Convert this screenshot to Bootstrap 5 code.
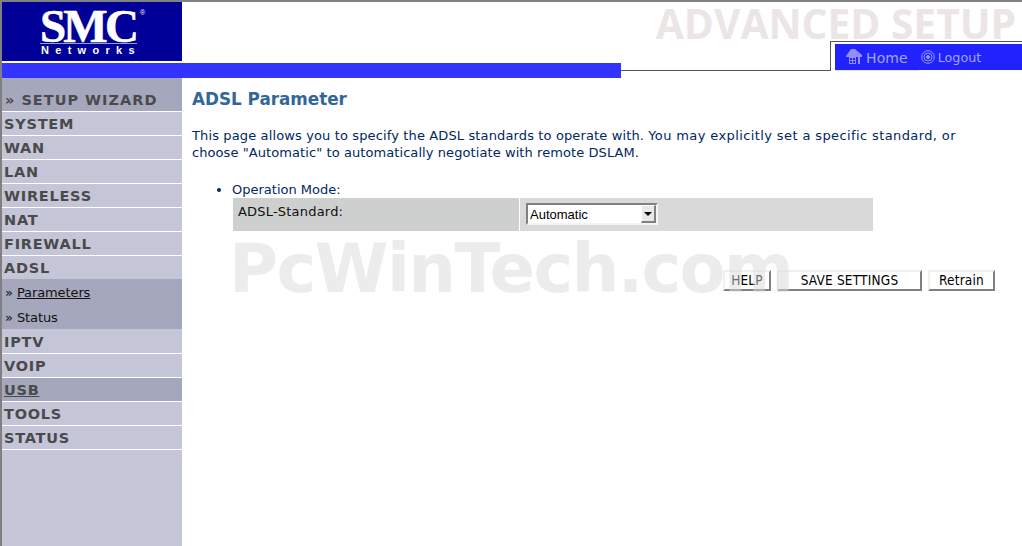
<!DOCTYPE html>
<html lang="en">

<head>
    <meta charset="UTF-8">
    <meta name="viewport" content="width=device-width, initial-scale=1.0">
    <title>ADSL Parameter</title>
    <link href="https://cdn.jsdelivr.net/npm/bootstrap@5.3.0/dist/css/bootstrap.min.css" rel="stylesheet">
    <style>
        html, body { height: 100%; }
        body {
            position: relative;
            overflow: hidden;
            border-top: 2px solid #808080;
            border-left: 2px solid #808080;
            font-family: "DejaVu Sans", Verdana, sans-serif;
            font-size: 13px;
            line-height: 17px;
            color: #00285f;
            background: #fff;
        }

        /* header */
        .head-wrap { height: 76px; }
        .head-left { width: 619px; }
        .logo-box { width: 180px; height: 59px; background: #000099; color: #fff; padding-left: 38px; }
        .logo-smc {
            font: 700 47px/31px "Liberation Serif", serif;
            letter-spacing: -2.8px;
            -webkit-text-stroke: .6px #fff;
            padding-top: 9px;
            border-bottom: 1px solid #7fa8c8;
            width: 97px;
            height: 42px;
            white-space: nowrap;
        }
        .logo-reg { font: 400 7px/8px "Liberation Sans", sans-serif; -webkit-text-stroke: 0; vertical-align: top; letter-spacing: 0; position: relative; top: -2px; left: 4px; }
        .logo-net { font: 700 11px/11px "Liberation Sans", sans-serif; letter-spacing: 6.3px; width: 97px; padding-top: 1px; padding-left: 1px; white-space: nowrap; }
        .blue-bar { height: 15px; margin-top: 2px; background: #3333ff; }
        .head-title { height: 39px; }
        .title-text { font: 700 40.7px/42px "Open Sans", sans-serif; color: #ebe5e5; padding-right: 6px; white-space: nowrap; }
        .tab-gap { width: 209px; height: 30px; border-bottom: 1px solid #555; }
        .tab-frame { border-top: 1px solid #555; border-left: 1px solid #555; padding: 2px 0 0 4px; height: 30px; }
        .tab-blue { height: 26px; background: #2222ff; color: #a5a5ff; padding-left: 11px; }
        .tab-blue span { white-space: nowrap; }
        .tab-home { font-size: 14px; margin-left: 4px; margin-right: 13px; padding-top: 3px; letter-spacing: .1px; }
        .tab-logout { font-size: 12.7px; margin-left: 3px; }
        .home-icon { margin-top: -2px; }
        .tab-under { height: 1px; width: 84px; background: #e4dfe8; }

        /* side menu */
        .side-menu { width: 180px; background: #c5c5d8; }
        .side-menu .nav-link {
            height: 23px;
            margin-bottom: 1px;
            padding: 0 0 0 2px;
            font-weight: 700;
            font-size: 14.5px;
            line-height: 25px;
            letter-spacing: .75px;
            color: #4a4a4a;
            box-sizing: content-box;
        }
        .side-menu .menu-line { border-bottom: 1px solid #fff; margin-bottom: 0; }
        .side-menu .menu-wizard { height: 33px; line-height: 44px; font-size: 14.5px; letter-spacing: 1px; background: #a5a7bd; padding-left: 3px; }
        .side-menu .menu-active { background: #a5a7bd; text-decoration: underline; }
        .side-menu .menu-open { margin-bottom: 0; }
        .sub-menu { background: #a5a7bd; height: 50px; margin-bottom: 1px; }
        .sub-menu a { display: block; height: 25px; line-height: 27px; padding-left: 3px; color: #111; font-size: 13px; letter-spacing: -.1px; text-decoration: none; }
        .sub-menu a.sub-current span { text-decoration: underline; }

        /* main */
        .main-area { padding: 11px 0 0 10px; }
        .page-head { font-size: 16.8px; font-weight: 700; line-height: 20px; color: #336699; margin: 0 0 18px; }
        .page-text { margin: 0 0 20px; font-size: 13px; white-space: nowrap; }
        .text-wide-a { letter-spacing: .13px; }
        .text-wide-b { letter-spacing: .39px; }
        .text-wide-c { letter-spacing: .08px; }
        .mode-list { margin: 0; padding-left: 40px; }
        .std-table { width: 640px; margin-left: 41px; height: 33px; }
        .std-label { width: 286px; background: #cdd0cf; color: #111; padding: 5px 0 0 5px; margin-right: 1px; letter-spacing: .2px; }
        .std-value { background: #d9d9d9; padding: 5px 0 0 6px; }
        .select-wrap { position: relative; width: 132px; height: 22px; background: #fff; }
        .select-wrap .form-select {
            width: 132px;
            height: 22px;
            padding: 1px 0 0 2px;
            border: 2px solid;
            border-color: #808080 #f4f4f4 #f4f4f4 #808080;
            border-radius: 0;
            background-image: none;
            font: 13px/17px "Liberation Sans", Arial, sans-serif;
            color: #000;
            box-shadow: none;
        }
        .select-arrow {
            position: absolute;
            top: 2px;
            right: 2px;
            width: 15px;
            height: 18px;
            background: #e8e8e8;
            border: solid;
            border-width: 1px 2px 2px 1px;
            border-color: #fff #808080 #808080 #fff;
            pointer-events: none;
        }
        .select-arrow::after {
            content: "";
            position: absolute;
            left: 2px;
            top: 6px;
            border: 4px solid transparent;
            border-top: 4px solid #000;
            border-bottom: 0;
        }
        .btn-row { width: 803px; margin-top: 39px; gap: 6px; }
        .btn-old {
            height: 21px;
            padding: 0;
            border: 2px solid;
            border-color: #f0f0f0 #808080 #808080 #f0f0f0;
            border-radius: 0;
            background: #fff;
            color: #000;
            font: 13.5px/17px "DejaVu Sans Condensed", "DejaVu Sans", sans-serif;
            font-stretch: condensed;
            letter-spacing: .2px;
        }
        .btn-help { width: 48px; }
        .btn-save { width: 145px; }
        .btn-retrain { width: 67px; }

        .water-mark {
            position: absolute;
            left: 227px;
            top: 229px;
            font: 700 67px/76px "DejaVu Sans", sans-serif;
            letter-spacing: -1.6px;
            color: rgba(217, 217, 217, .5);
            pointer-events: none;
            white-space: nowrap;
        }
    </style>
</head>

<body class="d-flex flex-column">

    <!-- Header -->
    <header class="head-wrap d-flex flex-shrink-0">
        <div class="head-left d-flex flex-column">
            <div class="logo-box d-flex flex-column">
                <div class="logo-smc">SMC<span class="logo-reg">®</span></div>
                <div class="logo-net">Networks</div>
            </div>
            <div class="blue-bar"></div>
        </div>
        <div class="flex-grow-1 d-flex flex-column">
            <div class="head-title d-flex justify-content-end">
                <div class="title-text">ADVANCED SETUP</div>
            </div>
            <div class="d-flex">
                <div class="tab-gap"></div>
                <div class="tab-frame flex-grow-1">
                    <div class="tab-blue d-flex align-items-center">
                        <svg class="home-icon" width="16" height="15" viewBox="0 0 16 15" fill="#8f8fff">
                            <path d="M0 7 5 0h4l7 6v2H0z" />
                            <path d="M3 8h7v7H3zM12 8h2v7h-2z" />
                            <path d="M4 9h2v2H4zM7 9h2v2H7zM4 12h2v2H4zM7 12h2v2H7z" fill="#2222ff" />
                        </svg>
                        <span class="tab-home">Home</span>
                        <svg width="14" height="14" viewBox="0 0 14 14" fill="none" stroke="#9a9aff">
                            <circle cx="7" cy="7" r="6.3" />
                            <circle cx="7" cy="7" r="4" />
                            <circle cx="7" cy="7" r="1.5" fill="#9a9aff" />
                        </svg>
                        <span class="tab-logout">Logout</span>
                    </div>
                    <div class="tab-under"></div>
                </div>
            </div>
        </div>
    </header>

    <div class="d-flex flex-grow-1">

        <!-- Side menu -->
        <nav class="side-menu nav flex-column flex-nowrap flex-shrink-0 d-flex">
            <a class="nav-link menu-wizard menu-line" href="#">» SETUP WIZARD</a>
            <a class="nav-link menu-line" href="#">SYSTEM</a>
            <a class="nav-link menu-line" href="#">WAN</a>
            <a class="nav-link menu-line" href="#">LAN</a>
            <a class="nav-link menu-line" href="#">WIRELESS</a>
            <a class="nav-link menu-line" href="#">NAT</a>
            <a class="nav-link menu-line" href="#">FIREWALL</a>
            <a class="nav-link menu-open" href="#">ADSL</a>
            <div class="sub-menu">
                <a class="sub-current" href="#">» <span>Parameters</span></a>
                <a href="#">» <span>Status</span></a>
            </div>
            <a class="nav-link menu-line" href="#">IPTV</a>
            <a class="nav-link menu-line" href="#">VOIP</a>
            <a class="nav-link menu-line menu-active" href="#">USB</a>
            <a class="nav-link menu-line" href="#">TOOLS</a>
            <a class="nav-link menu-line" href="#">STATUS</a>
        </nav>

        <!-- Main Content -->
        <main class="main-area flex-grow-1">
            <h1 class="page-head">ADSL Parameter</h1>
            <p class="page-text"><span class="text-wide-a">This page allows you to specify the ADSL standards to operate with.</span> <span class="text-wide-b">You may explicitly set a specific standard, or</span><br><span class="text-wide-c">choose "Automatic" to automatically negotiate with remote DSLAM.</span></p>
            <ul class="mode-list">
                <li>Operation Mode:</li>
            </ul>
            <div class="std-table d-flex">
                <div class="std-label">ADSL-Standard:</div>
                <div class="std-value flex-grow-1">
                    <div class="select-wrap">
                        <select class="form-select">
                            <option>Automatic</option>
                        </select>
                        <div class="select-arrow"></div>
                    </div>
                </div>
            </div>
            <div class="btn-row d-flex justify-content-end">
                <button type="button" class="btn btn-old btn-help">HELP</button>
                <button type="button" class="btn btn-old btn-save">SAVE SETTINGS</button>
                <button type="button" class="btn btn-old btn-retrain">Retrain</button>
            </div>
        </main>
    </div>

    <div class="water-mark">PcWinTech.com</div>

    <script src="https://cdn.jsdelivr.net/npm/bootstrap@5.3.0/dist/js/bootstrap.bundle.min.js"></script>

</body>

</html>
